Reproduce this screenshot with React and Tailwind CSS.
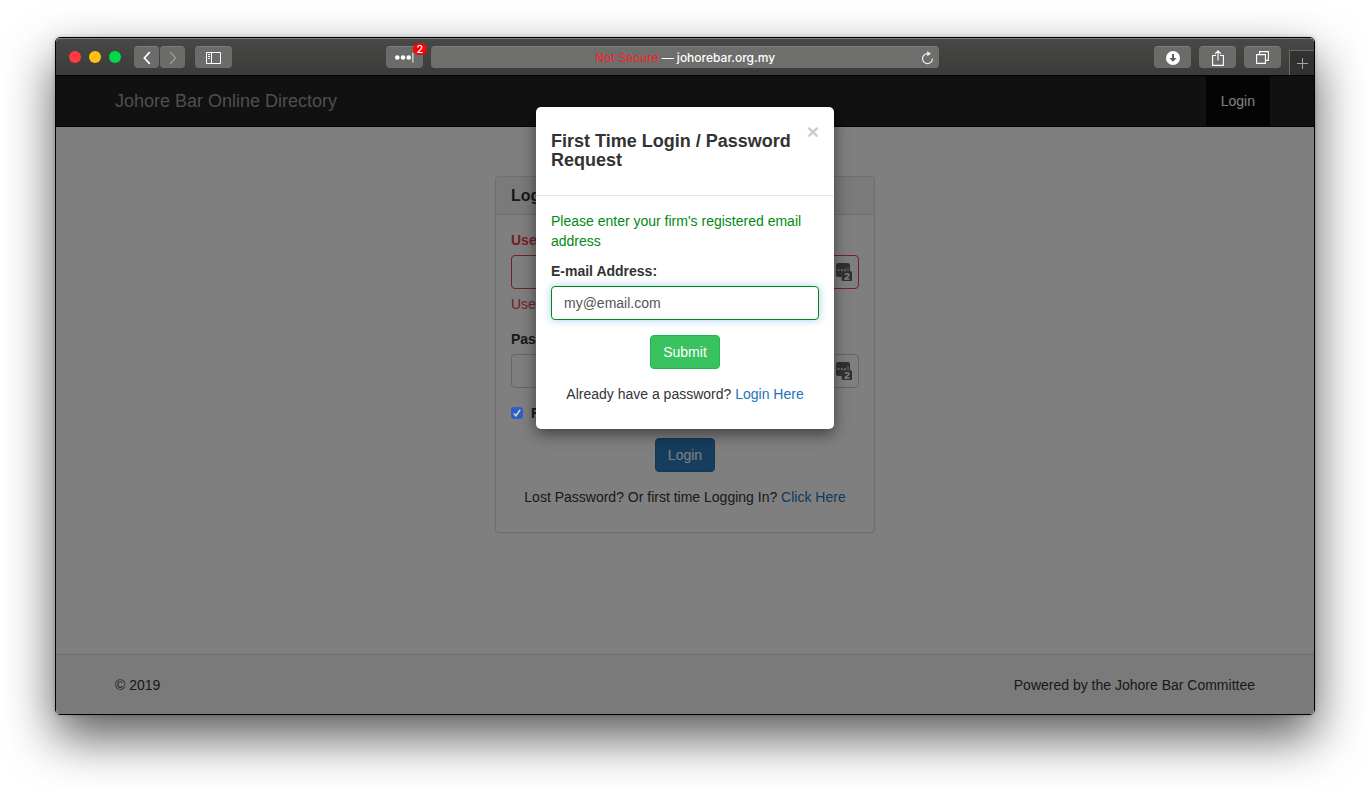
import React, { useState } from "react";

const toolButton = "flex h-[22px] items-center justify-center rounded bg-[#6b6b6a] border-t border-[#7c7c7b] text-white";
const fieldClass = "block h-[34px] w-full rounded border bg-white px-3 text-sm text-[#555]";

function BrowserToolbar() {
  return (
    <div className="flex h-[38px] shrink-0 items-center rounded-t-[4px] border-t border-b border-t-[#7d7d7c] border-b-black bg-linear-to-b from-[#484847] to-[#3b3b3a]">
      <div className="flex flex-1 items-center pl-[13px]">
        <div className="flex gap-2">
          <span className="size-3 rounded-full bg-[#ff3b3f]" />
          <span className="size-3 rounded-full bg-[#ffc012]" />
          <span className="size-3 rounded-full bg-[#00d94a]" />
        </div>
        <div className="ml-[13px] flex gap-px">
          <button aria-label="Back" className={`${toolButton} w-[25px]`}>
            <svg width="8" height="14" viewBox="0 0 8 14" fill="none" stroke="currentColor" strokeWidth="1.7">
              <path d="M6.8 1.2 1.4 7l5.4 5.8" />
            </svg>
          </button>
          <button aria-label="Forward" className={`${toolButton} w-[25px]`}>
            <svg width="8" height="14" viewBox="0 0 8 14" fill="none" stroke="#9b9b9a" strokeWidth="1.3">
              <path d="M1.2 1.2 6.6 7l-5.4 5.8" />
            </svg>
          </button>
        </div>
        <button aria-label="Sidebar" className={`${toolButton} ml-[10px] w-[37px]`}>
          <svg width="15" height="12" viewBox="0 0 15 12" fill="none" stroke="currentColor">
            <path d="M.5.5h14v11H.5zM5.5.5v11M2 2.5h2M2 4.5h2M2 6.5h2" />
          </svg>
        </button>
        <button aria-label="Password manager" className={`${toolButton} relative mr-2 ml-auto w-[37px]`}>
          <svg width="19" height="10" viewBox="0 0 19 10" fill="currentColor">
            <circle cx="2.3" cy="4.5" r="2.3" />
            <circle cx="8" cy="4.5" r="2.3" />
            <circle cx="13.7" cy="4.5" r="2.3" />
            <path d="M17 0h1.6v9.500H17z" opacity=".6" />
          </svg>
          <span className="absolute -top-1 -right-1 flex h-3 w-[14px] items-center justify-center rounded-full bg-[#f80505] font-[Inter,sans-serif] text-[11px] font-medium">
            2
          </span>
        </button>
      </div>

      <div className="relative flex h-[22px] w-[508px] items-center justify-center rounded border-t border-[#7c7c7b] bg-[#6e6e6d] font-[Inter,sans-serif] text-xs font-medium text-white">
        <span className="font-normal text-[#ff1d25]">Not Secure</span>
        <span className="whitespace-pre"> — johorebar.org.my</span>
        <button aria-label="Reload" className="absolute right-[5px]">
          <svg width="13" height="14" viewBox="0 0 13 14" fill="none" stroke="#eee" strokeWidth="1.2">
            <path d="M7.2 2.6H6.5a5 5 0 1 0 5 5" />
            <path d="M6.2 0 10 2.7 6.2 5.2z" fill="#eee" stroke="none" />
          </svg>
        </button>
      </div>

      <div className="flex flex-1 items-center justify-end gap-2 self-stretch pl-[13px]">
        <button aria-label="Downloads" className={`${toolButton} w-[37px]`}>
          <svg width="14" height="14" viewBox="0 0 14 14">
            <circle cx="7" cy="7" r="7" fill="#fff" />
            <path d="M6 3h2v4h2.6L7 10.8 3.4 7H6z" fill="#5b5b5a" />
          </svg>
        </button>
        <button aria-label="Share" className={`${toolButton} w-[37px]`}>
          <svg width="12" height="16" viewBox="0 0 12 16" fill="none" stroke="currentColor" strokeWidth="1.1">
            <path d="M4 5.5H.6v9.9h10.8V5.5H8M6 10.5V1M3 3.9 6 .9l3 3" />
          </svg>
        </button>
        <button aria-label="Show tabs" className={`${toolButton} w-[37px]`}>
          <svg width="13" height="13" viewBox="0 0 13 13" fill="none" stroke="currentColor" strokeWidth="1.1">
            <path d="M.6 3.6h8.8v8.8H.6zM3.6 3.4V.6h8.8v8.8H9.6" />
          </svg>
        </button>
        <button aria-label="New tab" className="flex h-[25px] w-[25px] items-center justify-center self-end border-t border-l border-[#6a6a69] bg-[#31312f]">
          <svg width="11" height="11" viewBox="0 0 11 11" stroke="#a5a5a5">
            <path d="M5.5 0v11M0 5.5h11" />
          </svg>
        </button>
      </div>
    </div>
  );
}

function KeyBadge() {
  return (
    <svg className="absolute top-2 right-[7px]" width="16" height="18" viewBox="0 0 16 18">
      <rect width="14" height="14" rx="2" fill="#606060" />
      <path d="M1.5 6h2v2h-2zM4.8 6h2v2h-2zM8.1 6h2v2h-2zM11.5 4h1v4h-1z" fill="#ccc" />
      <rect x="5.5" y="8" width="11" height="10.5" rx="2" fill="#999" />
      <rect x="6" y="8.500" width="10" height="9.500" rx="1.5" fill="#606060" />
      <path d="M8.800 11.800c.4-1.5 4.200-1.500 4.200.2 0 1.500-3.400 2-4 3.900h4.500" fill="none" stroke="#fff" strokeWidth="1.500" />
    </svg>
  );
}

function LoginPanel() {
  return (
    <section className="mx-auto mt-[49px] w-[380px] max-w-full rounded border border-[#ddd] bg-white shadow-xs">
      <h3 className="rounded-t border-b border-[#ddd] bg-[#f5f5f5] px-[15px] py-[9px] text-base leading-[19px] font-bold">Login</h3>
      <form className="p-[15px]" onSubmit={(e) => e.preventDefault()}>
        <div className="mb-[15px] text-[#e8404a]">
          <label htmlFor="username" className="mb-[5px] block font-bold">Username</label>
          <div className="relative">
            <input id="username" type="text" className={`${fieldClass} border-[#e8404a]`} />
            <KeyBadge />
          </div>
          <p className="mt-[5px]">Username</p>
        </div>
        <div className="mb-[15px]">
          <label htmlFor="password" className="mb-[5px] block font-bold">Password</label>
          <div className="relative">
            <input id="password" type="password" className={`${fieldClass} border-[#ccc]`} />
            <KeyBadge />
          </div>
        </div>
        <label className="mb-[15px] flex items-center gap-2 font-bold">
          <span className="relative z-10 grid size-3">
            <input type="checkbox" defaultChecked className="peer col-start-1 row-start-1 size-3 appearance-none rounded-[3px] border border-[#777] checked:border-[#2f5fc4] checked:bg-[#2f5fc4]" />
            <svg className="pointer-events-none invisible col-start-1 row-start-1 peer-checked:visible" width="12" height="12" viewBox="0 0 12 12" fill="none" stroke="#d5d5d5" strokeWidth="1.5">
              <path d="M2.800 6.400 5 8.800l4.200-6" />
            </svg>
          </span>
          Remember Me
        </label>
        <div className="text-center">
          <button className="h-[34px] rounded border border-[#2e6da4] bg-[#2d7bbd] px-3 text-white">Login</button>
          <p className="mt-[15px] mb-[10px]">
            Lost Password? Or first time Logging In? <a href="#request" className="text-[#2373b9]">Click Here</a>
          </p>
        </div>
      </form>
    </section>
  );
}

function PasswordRequestModal() {
  const [email, setEmail] = useState("");

  return (
    <div className="absolute inset-0 flex items-start justify-center rounded-b-[4px] bg-black/50 pt-[31px]">
      <div role="dialog" aria-labelledby="request-title" className="w-[298px] rounded-[5px] bg-white shadow-[0_5px_15px_rgba(0,0,0,0.5)]">
        <div className="flex items-start justify-between border-b border-[#e5e5e5] p-[15px]">
          <h4 id="request-title" className="my-[10px] text-lg leading-[19px] font-bold">
            First Time Login / Password Request
          </h4>
          <button aria-label="Close" className="text-[21px] leading-5 font-bold text-[#ccc]">×</button>
        </div>
        <form className="p-[15px]" onSubmit={(e) => e.preventDefault()}>
          <p className="mb-[10px] text-[#008a11]">Please enter your firm's registered email address</p>
          <label htmlFor="email" className="mb-[5px] block font-bold">E-mail Address:</label>
          <input
            id="email"
            type="email"
            placeholder="my@email.com"
            value={email}
            onChange={(e) => setEmail(e.target.value)}
            className={`${fieldClass} border-[#008a11] shadow-[0_0_8px_rgba(102,175,233,0.6)] placeholder:text-[#555]`}
          />
          <div className="mt-[15px] text-center">
            <button className="h-[34px] rounded border border-[#1fb84f] bg-[#39c25f] px-3 text-white">Submit</button>
            <p className="mt-[15px] mb-[10px]">
              Already have a password? <a href="#login" className="text-[#2373b9]">Login Here</a>
            </p>
          </div>
        </form>
      </div>
    </div>
  );
}

export default function App() {
  return (
    <div className="flex min-h-screen bg-white px-[55px] pt-[37px] pb-[73px] font-['Liberation_Sans',Arial,sans-serif] text-sm leading-5 text-[#333]">
      <div className="flex flex-1 flex-col rounded-[5px] border border-black shadow-[0_22px_50px_rgba(0,0,0,0.65),0_0_4px_rgba(0,0,0,0.2)]">
        <BrowserToolbar />
        <div className="relative flex flex-1 flex-col rounded-b-[4px] bg-white">
          <nav className="border-b border-[#080808] bg-[#222]">
            <div className="mx-auto flex h-[50px] max-w-[1170px] items-stretch justify-between">
              <a href="#home" className="flex items-center pl-[15px] text-lg text-[#9d9d9d]">Johore Bar Online Directory</a>
              <a href="#login" className="flex items-center bg-[#080808] px-[15px] text-white">Login</a>
            </div>
          </nav>
          <main className="flex-1">
            <LoginPanel />
          </main>
          <footer className="flex h-[60px] items-center rounded-b-[4px] border-t border-[#ddd] bg-[#f5f5f5]">
            <div className="mx-auto flex w-full max-w-[1170px] justify-between px-[15px]">
              <span>© 2019</span>
              <span>Powered by the Johore Bar Committee</span>
            </div>
          </footer>
          <PasswordRequestModal />
        </div>
      </div>
    </div>
  );
}
